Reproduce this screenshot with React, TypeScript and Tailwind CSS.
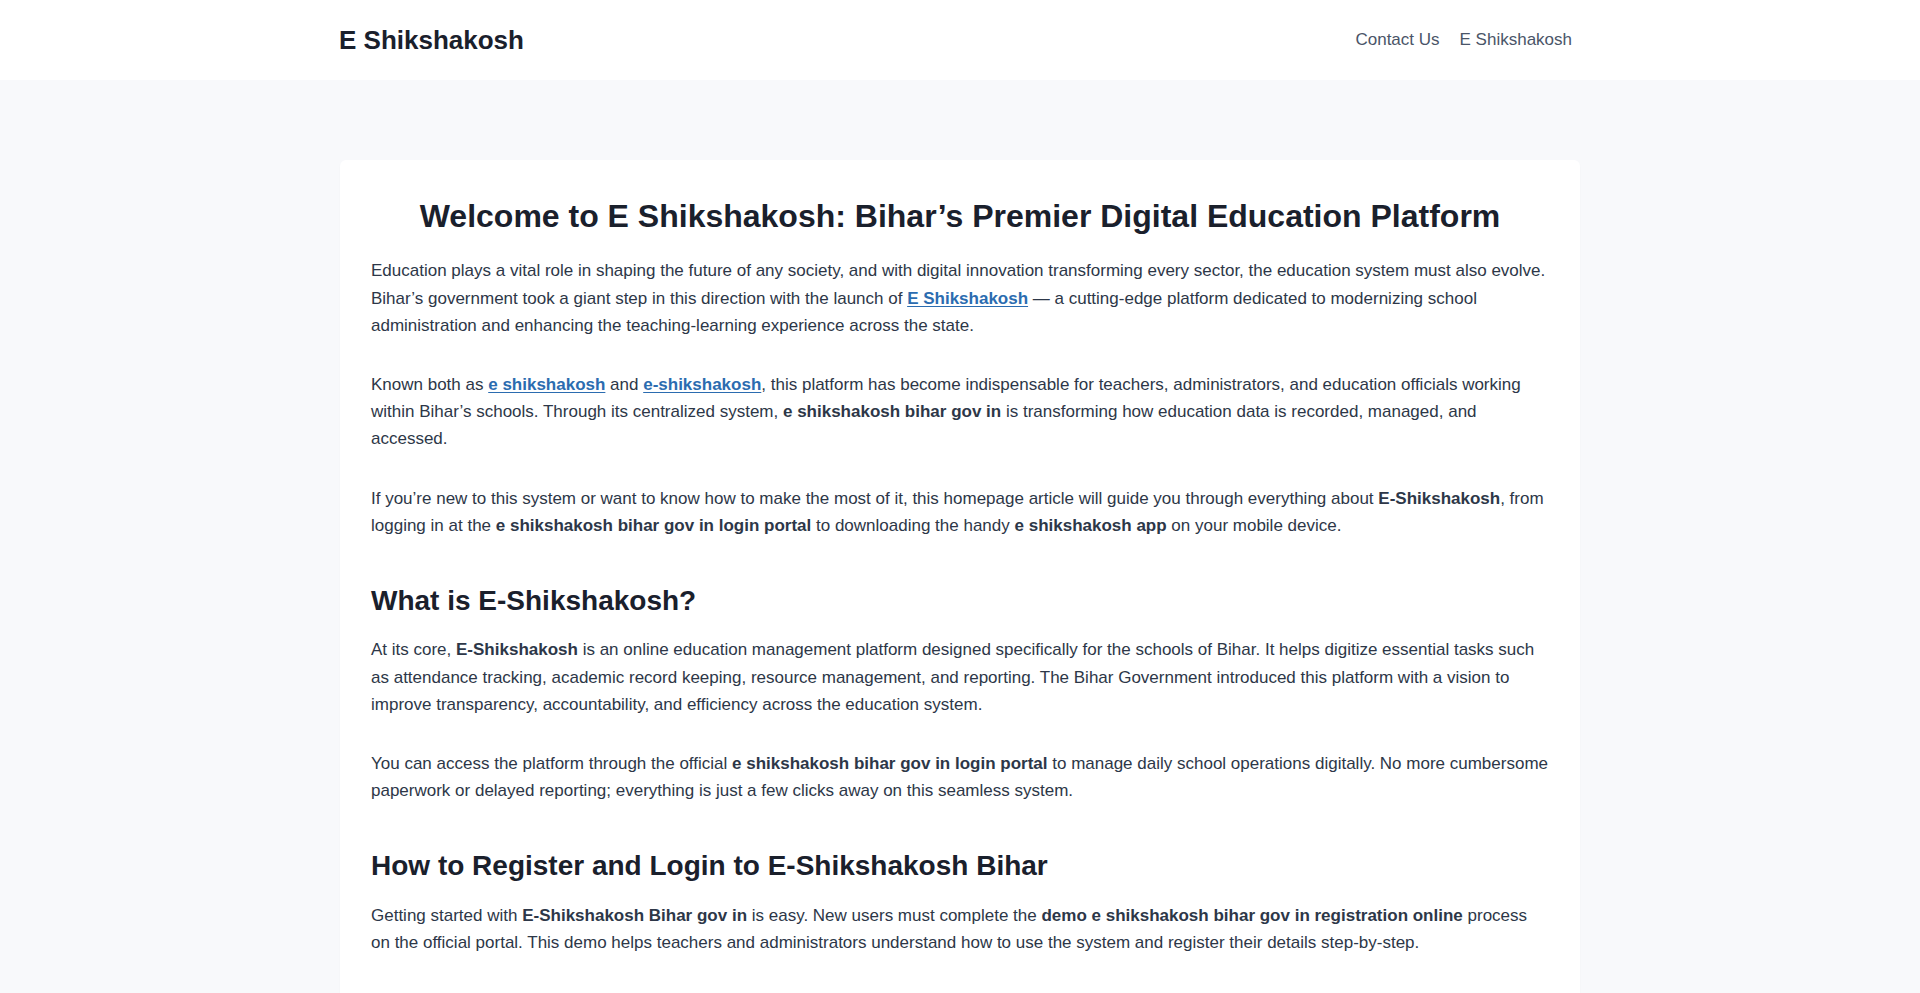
import type { ReactNode } from "react";

const font = { fontFamily: '"Liberation Sans", Arial, sans-serif' };

function A({ children }: { children: ReactNode }) {
  return (
    <a href="#" className="font-bold text-[#2b6cb0] underline underline-offset-2">
      {children}
    </a>
  );
}

function P({ children }: { children: ReactNode }) {
  return <p className="mb-8 text-[17px] leading-[1.6] text-[#2d3748]">{children}</p>;
}

function H2({ children }: { children: ReactNode }) {
  return (
    <h2 className="mt-[45px] mb-[19px] text-[28px] font-bold leading-[1.2] text-[#1a202c]">
      {children}
    </h2>
  );
}

export default function App() {
  return (
    <div className="min-h-screen bg-[#f8f9fb]" style={font}>
      {/* Header */}
      <header className="bg-white">
        <div className="mx-auto flex h-20 max-w-[1280px] items-center justify-between px-5">
          <a href="#" className="-ml-px text-[26px] font-bold text-[#1a202c]">
            E Shikshakosh
          </a>
          <nav className="flex items-center">
            <a href="#" className="pl-2.5 pr-3 text-[17px] text-[#4a5568]">
              Contact Us
            </a>
            <a href="#" className="pl-2 pr-2 text-[17px] text-[#4a5568]">
              E Shikshakosh
            </a>
          </nav>
        </div>
      </header>

      {/* Article */}
      <main className="mx-auto max-w-[1280px] px-5 pt-20">
        <article className="rounded-md bg-white px-[31px] pt-[37px] pb-10 shadow-[0_1px_2px_rgba(0,0,0,0.03)]">
          <h1 className="mb-[22px] text-center text-[32px] font-bold leading-[1.2] text-[#1a202c]">
            Welcome to E Shikshakosh: Bihar’s Premier Digital Education Platform
          </h1>

          <P>
            Education plays a vital role in shaping the future of any society, and with digital
            innovation transforming every sector, the education system must also evolve. Bihar’s
            government took a giant step in this direction with the launch of <A>E Shikshakosh</A> —
            a cutting-edge platform dedicated to modernizing school administration and enhancing the
            teaching-learning experience across the state.
          </P>

          <P>
            Known both as <A>e shikshakosh</A> and <A>e-shikshakosh</A>, this platform has become
            indispensable for teachers, administrators, and education officials working within
            Bihar’s schools. Through its centralized system, <b>e shikshakosh bihar gov in</b> is
            transforming how education data is recorded, managed, and accessed.
          </P>

          <P>
            If you’re new to this system or want to know how to make the most of it, this homepage
            article will guide you through everything about <b>E-Shikshakosh</b>, from logging in at
            the <b>e shikshakosh bihar gov in login portal</b> to downloading the handy{" "}
            <b>e shikshakosh app</b> on your mobile device.
          </P>

          <H2>What is E-Shikshakosh?</H2>

          <P>
            At its core, <b>E-Shikshakosh</b> is an online education management platform designed
            specifically for the schools of Bihar. It helps digitize essential tasks such as
            attendance tracking, academic record keeping, resource management, and reporting. The
            Bihar Government introduced this platform with a vision to improve transparency,
            accountability, and efficiency across the education system.
          </P>

          <P>
            You can access the platform through the official{" "}
            <b>e shikshakosh bihar gov in login portal</b> to manage daily school operations
            digitally. No more cumbersome paperwork or delayed reporting; everything is just a few
            clicks away on this seamless system.
          </P>

          <H2>How to Register and Login to E-Shikshakosh Bihar</H2>

          <P>
            Getting started with <b>E-Shikshakosh Bihar gov in</b> is easy. New users must complete
            the <b>demo e shikshakosh bihar gov in registration online</b> process on the official
            portal. This demo helps teachers and administrators understand how to use the system and
            register their details step-by-step.
          </P>

          <P>
            Once registered, users can log in with their credentials to access dashboards, submit
            attendance, view reports and manage school records from anywhere in the state.
          </P>
        </article>
      </main>
    </div>
  );
}
